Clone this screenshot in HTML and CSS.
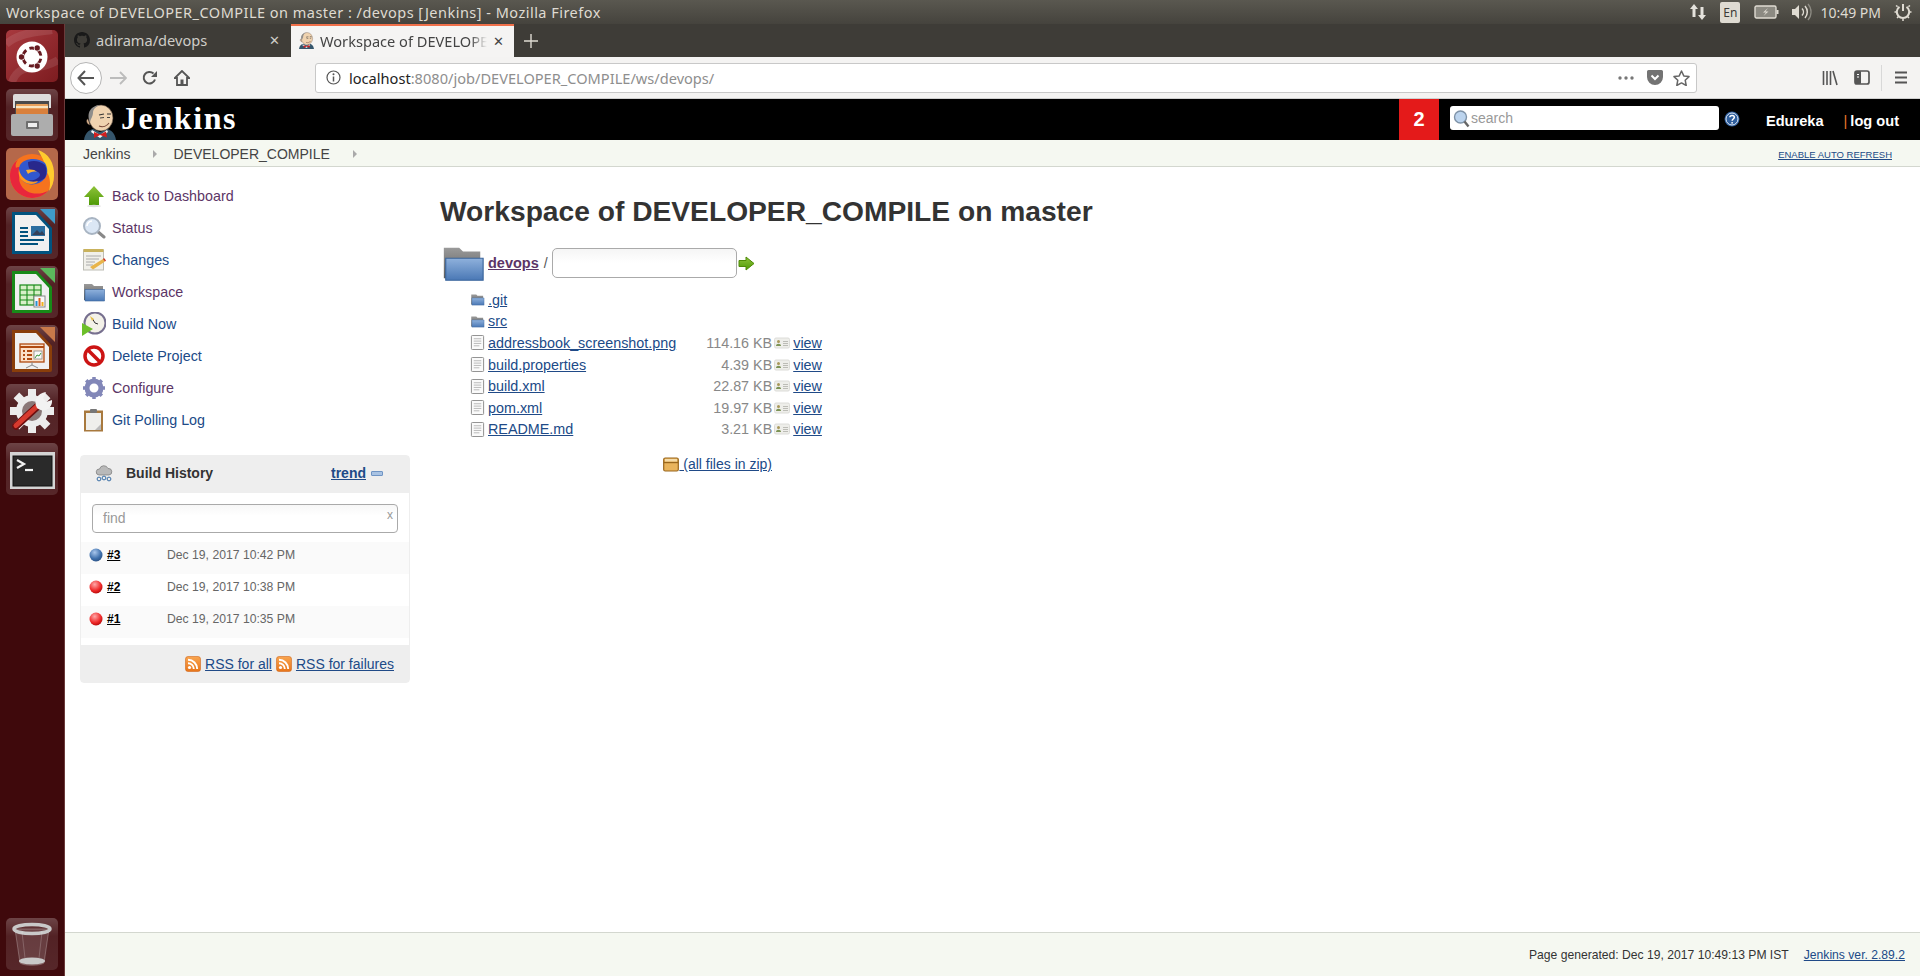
FILE: index.html
```html
<!DOCTYPE html>
<html lang="en">
<head>
    <meta charset="UTF-8">
    <title>Workspace of DEVELOPER_COMPILE on master : /devops [Jenkins]</title>
    <link rel="stylesheet" href="styles.css">
</head>
<body>
    <svg class="sprite" xmlns="http://www.w3.org/2000/svg">
        <defs>
            <linearGradient id="blueFolder" x1="0" y1="0" x2="0" y2="1"><stop offset="0" stop-color="#8fb1dc"/><stop offset="1" stop-color="#4a78b5"/></linearGradient>
            <linearGradient id="grayFolder" x1="0" y1="0" x2="0" y2="1"><stop offset="0" stop-color="#9a9a9a"/><stop offset="1" stop-color="#5c5c5c"/></linearGradient>
            <linearGradient id="greenArrow" x1="0" y1="0" x2="0" y2="1"><stop offset="0" stop-color="#8fc33a"/><stop offset="1" stop-color="#4e9a06"/></linearGradient>
            <radialGradient id="blueBall" cx=".4" cy=".3" r=".8"><stop offset="0" stop-color="#a8c6ec"/><stop offset=".6" stop-color="#3f70ac"/><stop offset="1" stop-color="#26497a"/></radialGradient>
            <radialGradient id="redBall" cx=".4" cy=".3" r=".8"><stop offset="0" stop-color="#ffa8a8"/><stop offset=".6" stop-color="#ef2929"/><stop offset="1" stop-color="#a40000"/></radialGradient>
            <linearGradient id="rssFill" x1="0" y1="0" x2="0" y2="1"><stop offset="0" stop-color="#f9a550"/><stop offset="1" stop-color="#e8751a"/></linearGradient>
        </defs>
        <symbol id="i-folder" viewBox="0 0 24 24">
            <path d="M2 4h8l2 2h9v14H2z" fill="url(#grayFolder)"/>
            <path d="M3 9.500h19.500v11.500H3z" fill="url(#blueFolder)" stroke="#3b659c" stroke-width=".6"/>
        </symbol>
        <symbol id="i-file" viewBox="0 0 16 16">
            <rect x="1.500" y=".5" width="13" height="15" rx="1" fill="#fafafa" stroke="#8a8a8a"/>
            <path d="M4 4h8M4 6.500h8M4 9h8M4 11.500h6" stroke="#b5b5b5" stroke-width="1"/>
        </symbol>
        <symbol id="i-view" viewBox="0 0 16 12">
            <rect x=".5" y="1" width="15" height="10" rx="1.500" fill="#eeeeea" stroke="#dcdcd8"/>
            <circle cx="4.500" cy="4.500" r="1.500" fill="#a8985a"/>
            <path d="M2 9c0-3 5-3 5 0z" fill="#7c9354"/>
            <path d="M9 4.500h5M9 6.500h5M9 8.500h5" stroke="#b5b5b0" stroke-width=".9"/>
        </symbol>
        <symbol id="i-rss" viewBox="0 0 16 16">
            <rect x=".5" y=".5" width="15" height="15" rx="2.500" fill="url(#rssFill)" stroke="#d2691e" stroke-width=".6"/>
            <circle cx="4.500" cy="11.500" r="1.600" fill="#fff"/>
            <path d="M3 7.200a5.800 5.800 0 0 1 5.800 5.800M3 3.800a9.200 9.200 0 0 1 9.200 9.200" fill="none" stroke="#fff" stroke-width="1.900"/>
        </symbol>
        <symbol id="i-butler" viewBox="0 0 32 36">
            <path d="M0 36c1-7 5-10 9-11l7 3 7-3c4 1 8 4 9 11z" fill="#35556b"/>
            <path d="M4 15c-2 0-2 5 2 6z" fill="#e6bd95" stroke="#4a3a30" stroke-width=".5"/>
            <ellipse cx="17" cy="14" rx="12" ry="13" fill="#f0d3b0" stroke="#4a3a30" stroke-width=".6"/>
            <path d="M6 18C2 9 7 1 17 1c-5 1-8 4-8 8 0 3-2 5-3 9z" fill="#8f8d8b"/>
            <path d="M15 11l5-1M23 10l4 0" stroke="#333" stroke-width="1.200"/>
            <path d="M16 14l4-.5M23 13.500h3" stroke="#333" stroke-width=".9"/>
            <path d="M15 22c4 1.500 8 0 10-3" fill="none" stroke="#7a4a3a" stroke-width="1.100"/>
            <path d="M8 26l8 5 7-5 1 2-8 6-9-6z" fill="#f5f5f5"/>
            <path d="M10 28l6 2.500 6-3 1 6-7-2.500-6 3z" fill="#d01f1f"/>
        </symbol>
    </svg>

    <div class="title-bar">
        <div class="title-text">Workspace of DEVELOPER_COMPILE on master : /devops [Jenkins] - Mozilla Firefox</div>
        <div class="indicators">
            <svg class="ind-net" width="18" height="20" viewBox="0 0 18 20"><path d="M5 2l4 5H6.500v8h-3V7H1zM13 18l-4-5h2.500V5h3v8H17z" fill="#e4e2dc"/></svg>
            <span class="ind-lang">En</span>
            <svg class="ind-batt" width="25" height="14" viewBox="0 0 25 14"><rect x="1" y="1" width="21" height="12" rx="1.500" fill="#8c8a82" stroke="#dfdbd2" stroke-width="1.400"/><rect x="22.500" y="5" width="2" height="4" fill="#dfdbd2"/><path d="M14 3l-5 4.500h3L9.500 11l5-4.500h-3z" fill="#dfdbd2"/></svg>
            <svg class="ind-sound" width="22" height="20" viewBox="0 0 22 20"><path d="M1 7h3l4-4v14l-4-4H1z" fill="#dfdbd2"/><path d="M11 6.500a5 5 0 0 1 0 7M14 4a9 9 0 0 1 0 12" fill="none" stroke="#dfdbd2" stroke-width="1.500"/><path d="M17 2a12 12 0 0 1 0 16" fill="none" stroke="#8c8a82" stroke-width="1.300"/></svg>
            <span class="ind-time">10:49 PM</span>
            <svg class="ind-power" width="18" height="18" viewBox="0 0 18 18"><path d="M9 1v7" stroke="#dfdbd2" stroke-width="2"/><path d="M5.500 3.800a6.200 6.200 0 1 0 7 0" fill="none" stroke="#dfdbd2" stroke-width="2"/><path d="M2 2.500l1.600 1.200M16 2.500l-1.600 1.200M.5 9h1.600M15.900 9h1.600M3 15l1.300-1.300M15 15l-1.300-1.300M9 16v2" stroke="#dfdbd2" stroke-width="1.500"/></svg>
        </div>
    </div>

    <div class="desktop">
        <div class="launcher">
            <div class="tile tile-ubuntu">
                <svg width="52" height="52" viewBox="0 0 52 52">
                    <path d="M0 14C14 2 34 2 46 0M6 52C14 30 30 44 52 30" fill="none" stroke="#fff" stroke-opacity=".1" stroke-width="8"/>
                    <circle cx="26" cy="27" r="15.500" fill="#fff"/>
                    <circle cx="26" cy="27" r="9" fill="none" stroke="#661a20" stroke-width="2.800" stroke-dasharray="15.300 3.550" stroke-dashoffset="-1.800"/>
                    <circle cx="15.500" cy="27" r="3.400" fill="#fff"/><circle cx="15.500" cy="27" r="2.700" fill="#661a20"/>
                    <circle cx="31.200" cy="18" r="3.400" fill="#fff"/><circle cx="31.200" cy="18" r="2.700" fill="#661a20"/>
                    <circle cx="31.200" cy="36" r="3.400" fill="#fff"/><circle cx="31.200" cy="36" r="2.700" fill="#661a20"/>
                </svg>
            </div>
            <div class="tile">
                <svg width="52" height="52" viewBox="0 0 52 52">
                    <path d="M7 7a2 2 0 0 1 2-2h34a2 2 0 0 1 2 2v12H7z" fill="#dcdcdc"/>
                    <rect x="9" y="12" width="34" height="16" fill="#4a4a4a"/>
                    <rect x="10" y="15" width="32" height="8" rx="1" fill="#e8a15c"/>
                    <rect x="10" y="17" width="32" height="2" fill="#f7e3c0"/>
                    <rect x="10" y="20" width="32" height="8" fill="#d9803c"/>
                    <rect x="5" y="25" width="42" height="22" rx="2" fill="#adadad"/>
                    <rect x="20" y="32" width="13" height="8" rx="1" fill="#6e6e6e"/>
                    <rect x="22" y="34" width="9" height="4" fill="#efefef"/>
                </svg>
            </div>
            <div class="tile tile-firefox">
                <svg width="52" height="52" viewBox="0 0 52 52">
                    <circle cx="26" cy="28" r="22" fill="#f6731e"/>
                    <path d="M4 28a22 22 0 0 0 38 15c-10 5-24 3-28-8-3-8 2-12 6-14-3-2-8-3-10-1-1-3 0-6 2-8-5 3-8 9-8 16z" fill="#e8263c"/>
                    <path d="M32 2c10 3 17 13 16 26 0 6-2 11-5 15 2-8 1-15-3-20 0-8-4-13-8-21z" fill="#ffcb2e"/>
                    <path d="M14 17c5-7 17-8 25-2 3 5 3 11 0 15-6 8-17 8-22 3-4-5-5-11-3-16z" fill="#3158cf"/>
                    <path d="M22 14c6-2 12-1 17 3 2 4 2 9 0 13-4 4-12 5-17 2 5 1 11-1 12-5 0-3-5-5-9-4-2-2-3-5-3-9z" fill="#28288c"/>
                    <path d="M13 21c1 8 9 15 19 12-2 4-11 4-15 0-4-3-5-8-4-12z" fill="#ff9a1e"/>
                    <path d="M20 22c3-1 9-1 11 2-3-1-7 0-9 2z" fill="#ffb12e"/>
                </svg>
            </div>
            <div class="tile">
                <svg width="52" height="52" viewBox="0 0 52 52">
                    <path d="M6 5h25l15 16v24a2 2 0 0 1-2 2H6z" fill="#01537f"/>
                    <path d="M9 8h21l13 14v22H9z" fill="#f0f0f0"/>
                    <path d="M34 2h15v15z" fill="#3f9ac9"/>
                    <path d="M14 21h8M14 25h8M14 29h8M14 33h24M14 37h18" stroke="#01537f" stroke-width="2"/>
                    <rect x="25" y="19" width="14" height="10" fill="#2c6ea0"/>
                    <path d="M26 28l5-5 3 3 2-2 3 4z" fill="#35415a"/>
                </svg>
            </div>
            <div class="tile">
                <svg width="52" height="52" viewBox="0 0 52 52">
                    <path d="M6 5h25l15 16v24a2 2 0 0 1-2 2H6z" fill="#188a18"/>
                    <path d="M9 8h21l13 14v22H9z" fill="#f0f0f0"/>
                    <path d="M34 2h15v15z" fill="#5cb85c"/>
                    <rect x="14" y="19" width="21" height="20" fill="#d8f0c8" stroke="#188a18" stroke-width="1.200"/>
                    <path d="M14 24h21M14 29h21M14 34h21M21 19v20M28 19v20" stroke="#188a18" stroke-width="1.100"/>
                    <rect x="28" y="30" width="11" height="11" fill="#f8f8f8" stroke="#888" stroke-width="1"/>
                    <rect x="29.500" y="35" width="2" height="5" fill="#2a8fd0"/><rect x="32.500" y="32" width="2" height="8" fill="#e06020"/><rect x="35.500" y="36" width="2" height="4" fill="#f0b020"/>
                </svg>
            </div>
            <div class="tile">
                <svg width="52" height="52" viewBox="0 0 52 52">
                    <path d="M6 5h25l15 16v24a2 2 0 0 1-2 2H6z" fill="#8a3e0a"/>
                    <path d="M9 8h21l13 14v22H9z" fill="#f0f0f0"/>
                    <path d="M34 2h15v15z" fill="#c8794a"/>
                    <rect x="14" y="19" width="24" height="18" fill="#fce0c8" stroke="#b04a10" stroke-width="1.300"/>
                    <path d="M14 22h24" stroke="#b04a10" stroke-width="2"/>
                    <path d="M17 26h2M21 26h5M17 30h2M21 30h5M17 34h2M21 34h5" stroke="#b04a10" stroke-width="2"/>
                    <rect x="28" y="26" width="8" height="8" fill="#f8f8f8" stroke="#888" stroke-width=".8"/>
                    <path d="M29 33l2-3 2 1 2-3" fill="none" stroke="#3a9a3a" stroke-width="1"/>
                    <path d="M26 37v3M26 40l-6 3M26 40l6 3" stroke="#888" stroke-width="1"/>
                </svg>
            </div>
            <div class="tile">
                <svg width="52" height="52" viewBox="0 0 52 52">
                    <circle cx="26" cy="27" r="16" fill="#ececec"/>
                    <path d="M26 5v44M4 27h44M10.400 11.400l31.200 31.200M41.600 11.400L10.400 42.600" stroke="#ececec" stroke-width="8"/>
                    <circle cx="26" cy="27" r="10" fill="#8a7878"/>
                    <path d="M10 42L33 21" stroke="#6e0f0f" stroke-width="7.500" stroke-linecap="round"/>
                    <path d="M10 41.500L33 20.500" stroke="#d63a2e" stroke-width="5" stroke-linecap="round"/>
                    <path d="M31 24c-4-7 0-15 9-16l-3 6 3 4 6-2c1 8-8 14-15 8z" fill="#f2f2f2"/>
                </svg>
            </div>
            <div class="tile">
                <svg width="52" height="52" viewBox="0 0 52 52">
                    <rect x="4" y="9" width="45" height="37" fill="#d4d4d4"/>
                    <rect x="7" y="13" width="39" height="30" fill="#2a2a2a" stroke="#111" stroke-width="1"/>
                    <path d="M11 17l7 4-7 4" fill="none" stroke="#f2f2f2" stroke-width="2.200"/>
                    <path d="M19 27h8" stroke="#f2f2f2" stroke-width="2.200"/>
                </svg>
            </div>
            <div class="launcher-spacer"></div>
            <div class="tile">
                <svg width="52" height="52" viewBox="0 0 52 52">
                    <path d="M9 11l5 34c4 3 20 3 24 0l5-34z" fill="#fff" fill-opacity=".12" stroke="#fff" stroke-opacity=".25"/>
                    <ellipse cx="26" cy="43" rx="13" ry="3.500" fill="#c9c9c9"/>
                    <ellipse cx="26" cy="11" rx="18" ry="4.500" fill="none" stroke="#c9c9c9" stroke-width="3.500"/>
                    <path d="M16 14l3 26M36 14l-3 26" stroke="#fff" stroke-opacity=".2"/>
                </svg>
            </div>
        </div>

        <div class="browser">
            <div class="tab-bar">
                <div class="tab">
                    <svg class="tab-icon" width="16" height="16" viewBox="0 0 16 16"><path fill="#191919" d="M8 0C3.580 0 0 3.580 0 8c0 3.540 2.290 6.530 5.470 7.590.4.070.55-.17.55-.38 0-.19-.01-.82-.01-1.490-2.010.37-2.530-.49-2.690-.94-.09-.23-.48-.94-.82-1.130-.28-.15-.68-.52-.01-.53.63-.01 1.080.58 1.230.82.72 1.210 1.870.87 2.330.66.070-.52.28-.87.51-1.070-1.780-.2-3.640-.89-3.640-3.950 0-.87.31-1.590.82-2.150-.08-.2-.36-1.020.08-2.120 0 0 .67-.21 2.200.82.64-.18 1.320-.27 2-.27.68 0 1.360.09 2 .27 1.530-1.040 2.200-.82 2.200-.82.44 1.100.16 1.920.08 2.120.51.56.82 1.270.82 2.150 0 3.070-1.870 3.750-3.650 3.950.29.25.54.73.54 1.480 0 1.070-.01 1.930-.01 2.200 0 .21.15.46.55.38A8.013 8.013 0 0016 8c0-4.420-3.580-8-8-8z"/></svg>
                    <span class="tab-label">adirama/devops</span>
                    <span class="tab-close">&#x2715;</span>
                </div>
                <div class="tab tab-active">
                    <svg class="tab-icon" width="15" height="17"><use href="#i-butler"/></svg>
                    <span class="tab-label tab-fade">Workspace of DEVELOPE</span>
                    <span class="tab-close">&#x2715;</span>
                </div>
                <svg class="tab-new" width="14" height="14" viewBox="0 0 14 14"><path d="M7 0v14M0 7h14" stroke="#dfdbd2" stroke-width="1.400"/></svg>
            </div>

            <div class="toolbar">
                <div class="back-btn">
                    <svg width="18" height="16" viewBox="0 0 18 16"><path d="M8 1L1.500 8 8 15M2 8h15" fill="none" stroke="#555" stroke-width="2"/></svg>
                </div>
                <svg class="tool-fwd" width="17" height="14" viewBox="0 0 17 14"><path d="M10 1l6 6-6 6M15 7H0" fill="none" stroke="#bcbcbc" stroke-width="1.800"/></svg>
                <svg class="tool-reload" width="16" height="16" viewBox="0 0 16 16"><path d="M13 9.500A5.800 5.800 0 1 1 11.500 3.500" fill="none" stroke="#555" stroke-width="2"/><path d="M15 1v6H9z" fill="#555"/></svg>
                <svg class="tool-home" width="16" height="16" viewBox="0 0 16 16"><path d="M8 1L.8 8h2.200v7h10V8h2.200z" fill="none" stroke="#555" stroke-width="1.800"/><rect x="6.500" y="9.500" width="3" height="5.500" fill="#555"/></svg>
                <div class="url-bar">
                    <svg class="url-info" width="15" height="15" viewBox="0 0 15 15"><circle cx="7.500" cy="7.500" r="6.500" fill="none" stroke="#555" stroke-width="1.200"/><path d="M7.500 6.500v5" stroke="#555" stroke-width="1.500"/><circle cx="7.500" cy="4.200" r="1" fill="#555"/></svg>
                    <span class="url-text"><b>localhost</b>:8080/job/DEVELOPER_COMPILE/ws/devops/</span>
                    <svg class="url-dots" width="16" height="4" viewBox="0 0 16 4"><circle cx="2" cy="2" r="1.700" fill="#777"/><circle cx="8" cy="2" r="1.700" fill="#777"/><circle cx="14" cy="2" r="1.700" fill="#777"/></svg>
                    <svg class="url-pocket" width="16" height="15" viewBox="0 0 16 15"><path d="M1.500 0h13A1.500 1.500 0 0 1 16 1.500V7a8 8 0 0 1-16 0V1.500A1.500 1.500 0 0 1 1.500 0z" fill="#737373"/><path d="M4.500 5.500L8 9l3.500-3.500" fill="none" stroke="#fff" stroke-width="2"/></svg>
                    <svg class="url-star" width="17" height="16" viewBox="0 0 17 16"><path d="M8.500 1l2.300 4.900 5.200.7-3.800 3.600 1 5.300-4.700-2.600-4.700 2.600 1-5.300L1 6.600l5.200-.7z" fill="none" stroke="#666" stroke-width="1.500" stroke-linejoin="round"/></svg>
                </div>
                <svg class="tool-lib" width="16" height="16" viewBox="0 0 16 16"><path d="M1.500 1v14M5 1v14M8.500 1v14M11 1l4 14" stroke="#555" stroke-width="1.600"/></svg>
                <svg class="tool-side" width="16" height="15" viewBox="0 0 16 15"><rect x="1" y="1" width="14" height="13" rx="2" fill="none" stroke="#555" stroke-width="1.700"/><rect x="1" y="1" width="6" height="13" rx="1" fill="#555"/><path d="M3 4.500h2M3 7h2" stroke="#fff"/></svg>
                <span class="tool-sep"></span>
                <svg class="tool-menu" width="14" height="13" viewBox="0 0 14 13"><path d="M1 1.500h12M1 6.500h12M1 11.500h12" stroke="#555" stroke-width="1.800"/></svg>
            </div>

            <div class="page">
                <div class="jenkins-head">
                    <div class="logo">
                        <svg width="32" height="36"><use href="#i-butler"/></svg>
                        <span class="logo-text">Jenkins</span>
                    </div>
                    <div class="head-right">
                        <span class="notif">2</span>
                        <div class="search-box">
                            <svg width="17" height="19" viewBox="0 0 17 19"><circle cx="7.500" cy="8" r="6" fill="#bcd4ee" stroke="#7f93a8" stroke-width="1.400"/><path d="M11.500 12.500l4 5" stroke="#666" stroke-width="2.400"/></svg>
                            <span>search</span>
                        </div>
                        <svg class="help" width="16" height="16" viewBox="0 0 16 16"><circle cx="8" cy="8" r="7.500" fill="#2f5f9e"/><circle cx="8" cy="8" r="6" fill="none" stroke="#dfe8f3" stroke-width="1"/><path d="M5.800 6.300C6 3.700 10.500 3.800 10.300 6.400c-.1 1.600-2.200 1.600-2.200 3.400" fill="none" stroke="#fff" stroke-width="1.500"/><circle cx="8.100" cy="11.800" r=".9" fill="#fff"/></svg>
                        <span class="user">Edureka</span>
                        <span class="logout"><i>|</i>log out</span>
                    </div>
                </div>

                <div class="breadcrumbs">
                    <span class="crumb">Jenkins</span><span class="crumb-arrow"></span>
                    <span class="crumb">DEVELOPER_COMPILE</span><span class="crumb-arrow"></span>
                    <a class="auto-refresh" href="#">ENABLE AUTO REFRESH</a>
                </div>

                <div class="main">
                    <div class="side-panel">
                        <div class="tasks">
                            <a class="task visited" href="#">
                                <svg width="24" height="24" viewBox="0 0 24 24"><path d="M12 2l10 11h-5v8H7v-8H2z" fill="url(#greenArrow)"/><ellipse cx="12" cy="22" rx="7" ry="1.200" fill="#ddd"/></svg>
                                Back to Dashboard</a>
                            <a class="task visited" href="#">
                                <svg width="24" height="24" viewBox="0 0 24 24"><path d="M15 15l7 6" stroke="#888" stroke-width="3" stroke-linecap="round"/><circle cx="10" cy="10" r="8" fill="#dbe7f5" stroke="#a8b4c2" stroke-width="2"/><path d="M5 10a5 5 0 0 1 5-5" fill="none" stroke="#fff" stroke-width="1.500"/></svg>
                                Status</a>
                            <a class="task" href="#">
                                <svg width="24" height="24" viewBox="0 0 24 24"><rect x="1.500" y="2" width="20" height="20" fill="#f1f0ea" stroke="#bdbdb5"/><rect x="1.500" y="1" width="20" height="3" fill="#c9b25c"/><path d="M4 8h15M4 11h13M4 14h9M4 17h7" stroke="#aaa" stroke-width="1"/><path d="M8 19l13-8 2 2.500-12 8z" fill="#e8b44a"/><path d="M21 11l2 2.500 1-1-2-2.500z" fill="#cc2a1a"/></svg>
                                Changes</a>
                            <a class="task visited" href="#">
                                <svg width="24" height="24"><use href="#i-folder"/></svg>
                                Workspace</a>
                            <a class="task" href="#">
                                <svg width="24" height="24" viewBox="0 0 24 24"><circle cx="13" cy="11" r="10.500" fill="#f3f1e8" stroke="#77708f" stroke-width="2"/><path d="M13 11l-3-5M13 11l3 1" stroke="#333" stroke-width="1"/><path d="M8 4l4 3-2 2z" fill="#e8c04a"/><path d="M0 11l11 6-11 7z" fill="#6cbf2a"/></svg>
                                Build Now</a>
                            <a class="task" href="#">
                                <svg width="24" height="24" viewBox="0 0 24 24"><circle cx="12" cy="12" r="9" fill="#fff" stroke="#cc1414" stroke-width="3.500"/><path d="M5.500 5.500l13 13" stroke="#cc1414" stroke-width="3.500"/></svg>
                                Delete Project</a>
                            <a class="task visited" href="#">
                                <svg width="24" height="24" viewBox="0 0 24 24"><circle cx="12" cy="12" r="7" fill="none" stroke="#8287b8" stroke-width="5"/><path d="M12 1v4M12 19v4M1 12h4M19 12h4M4.200 4.200l3 3M16.800 16.800l3 3M19.800 4.200l-3 3M7.200 16.800l-3 3" stroke="#8287b8" stroke-width="3.500"/></svg>
                                Configure</a>
                            <a class="task" href="#">
                                <svg width="24" height="24" viewBox="0 0 24 24"><rect x="2" y="2.500" width="19" height="21" fill="#a8793e"/><rect x="4" y="5" width="15" height="17" fill="#efefec"/><rect x="8" y="1" width="7" height="4" rx="1" fill="#777"/><path d="M13 22l6-6v6z" fill="#bbb"/></svg>
                                Git Polling Log</a>
                        </div>

                        <div class="history">
                            <div class="history-head">
                                <svg width="18" height="18" viewBox="0 0 18 18"><path d="M4 11a3 3 0 0 1 .5-6 4.500 4.500 0 0 1 8.500-.5 3.200 3.200 0 0 1 1 6.500z" fill="#b9b9b9" stroke="#777" stroke-width=".7"/><circle cx="4" cy="15" r="1.900" fill="none" stroke="#3a6ea5" stroke-width="1"/><circle cx="9" cy="14" r="1.900" fill="none" stroke="#3a6ea5" stroke-width="1"/><circle cx="14" cy="15" r="1.900" fill="none" stroke="#3a6ea5" stroke-width="1"/></svg>
                                <span class="history-title">Build History</span>
                                <a class="trend" href="#">trend</a>
                                <span class="collapse"></span>
                            </div>
                            <div class="find-row">
                                <div class="find-box"><span>find</span><em>x</em></div>
                            </div>
                            <div class="build-row">
                                <svg width="14" height="14" viewBox="0 0 14 14"><circle cx="7" cy="7" r="6.500" fill="url(#blueBall)"/></svg>
                                <a class="build-no" href="#">#3</a>
                                <span class="build-date">Dec 19, 2017 10:42 PM</span>
                            </div>
                            <div class="build-row">
                                <svg width="14" height="14" viewBox="0 0 14 14"><circle cx="7" cy="7" r="6.500" fill="url(#redBall)"/></svg>
                                <a class="build-no" href="#">#2</a>
                                <span class="build-date">Dec 19, 2017 10:38 PM</span>
                            </div>
                            <div class="build-row">
                                <svg width="14" height="14" viewBox="0 0 14 14"><circle cx="7" cy="7" r="6.500" fill="url(#redBall)"/></svg>
                                <a class="build-no" href="#">#1</a>
                                <span class="build-date">Dec 19, 2017 10:35 PM</span>
                            </div>
                            <div class="history-foot">
                                <svg width="16" height="16"><use href="#i-rss"/></svg>
                                <a href="#">RSS for all</a>
                                <svg width="16" height="16"><use href="#i-rss"/></svg>
                                <a href="#">RSS for failures</a>
                            </div>
                        </div>
                    </div>

                    <div class="content">
                        <h1>Workspace of DEVELOPER_COMPILE on master</h1>
                        <div class="path-row">
                            <svg width="46" height="46"><use href="#i-folder"/></svg>
                            <a class="path-link" href="#">devops</a>
                            <span class="path-sep">/</span>
                            <div class="path-input"></div>
                            <svg class="path-go" width="17" height="15" viewBox="0 0 17 15"><path d="M1 4.500h7V1l8 6.500L8 14v-3.500H1z" fill="url(#greenArrow)" stroke="#4e8a06" stroke-width="1"/></svg>
                        </div>
                        <table class="files">
                            <tr><td class="f-icon"><svg width="15" height="15"><use href="#i-folder"/></svg></td><td colspan="4"><a href="#">.git</a></td></tr>
                            <tr><td class="f-icon"><svg width="15" height="15"><use href="#i-folder"/></svg></td><td colspan="4"><a href="#">src</a></td></tr>
                            <tr><td class="f-icon"><svg width="15" height="15"><use href="#i-file"/></svg></td><td><a href="#">addressbook_screenshot.png</a></td><td class="f-size">114.16 KB</td><td class="f-view"><svg width="16" height="12"><use href="#i-view"/></svg></td><td><a href="#">view</a></td></tr>
                            <tr><td class="f-icon"><svg width="15" height="15"><use href="#i-file"/></svg></td><td><a href="#">build.properties</a></td><td class="f-size">4.39 KB</td><td class="f-view"><svg width="16" height="12"><use href="#i-view"/></svg></td><td><a href="#">view</a></td></tr>
                            <tr><td class="f-icon"><svg width="15" height="15"><use href="#i-file"/></svg></td><td><a href="#">build.xml</a></td><td class="f-size">22.87 KB</td><td class="f-view"><svg width="16" height="12"><use href="#i-view"/></svg></td><td><a href="#">view</a></td></tr>
                            <tr><td class="f-icon"><svg width="15" height="15"><use href="#i-file"/></svg></td><td><a href="#">pom.xml</a></td><td class="f-size">19.97 KB</td><td class="f-view"><svg width="16" height="12"><use href="#i-view"/></svg></td><td><a href="#">view</a></td></tr>
                            <tr><td class="f-icon"><svg width="15" height="15"><use href="#i-file"/></svg></td><td><a href="#">README.md</a></td><td class="f-size">3.21 KB</td><td class="f-view"><svg width="16" height="12"><use href="#i-view"/></svg></td><td><a href="#">view</a></td></tr>
                        </table>
                        <div class="zip-row">
                            <a href="#"><svg width="16" height="15" viewBox="0 0 16 15"><rect x=".7" y="1" width="14.600" height="13" rx="1.500" fill="#e9b45c" stroke="#99661c" stroke-width="1.200"/><path d="M.7 5.500h14.600" stroke="#99661c" stroke-width="1.400"/><rect x="2" y="2" width="12" height="2.500" fill="#f5dba8"/></svg> (all files in zip)</a>
                        </div>
                    </div>
                </div>

                <div class="foot">
                    <span>Page generated: Dec 19, 2017 10:49:13 PM IST</span>
                    <a href="#">Jenkins ver. 2.89.2</a>
                </div>
            </div>
        </div>
    </div>
</body>
</html>
```

FILE: styles.css
```css
html, body { margin: 0; height: 100%; overflow: hidden; }
body { font-family: "Liberation Sans", Arial, sans-serif; font-size: 14px; color: #333; background: #fff; display: flex; flex-direction: column; }
a { color: #204a87; }
svg { display: block; flex: none; }

.sprite { position: absolute; width: 0; height: 0; overflow: hidden; }

/* ubuntu top panel */
.title-bar {
    height: 24px;
    flex: none;
    display: flex;
    align-items: center;
    justify-content: space-between;
    padding: 0 8px 0 6px;
    background: linear-gradient(#5a5850, #45433d);
    color: #dfdbd2;
    font-family: "Noto Sans", sans-serif;
    font-size: 14.5px;
    letter-spacing: .48px;
}
.indicators { display: flex; align-items: center; letter-spacing: 0; }
.ind-lang { width: 20px; height: 21px; margin-left: 13px; background: #dfdbd2; color: #3c3b37; border-radius: 2px; font-size: 12px; text-align: center; line-height: 21px; }
.ind-batt { margin-left: 14px; }
.ind-sound { margin-left: 12px; }
.ind-time { margin-left: 7px; font-size: 14px; }
.ind-power { margin-left: 13px; }

.desktop { flex: 1; display: flex; min-height: 0; }

/* launcher */
.launcher {
    width: 64px;
    flex: none;
    border-right: 1px solid #6b3a3a;
    background: #3f090c;
    padding: 6px 0;
    display: flex;
    flex-direction: column;
    align-items: center;
    gap: 7px;
}
.launcher-spacer { flex: 1; }
.tile { width: 52px; height: 52px; border-radius: 5px; background: linear-gradient(rgba(255,255,255,.24), rgba(255,255,255,.1) 35%, rgba(255,255,255,.12)); }
.tile-ubuntu { background: linear-gradient(135deg, #a8393e, #7d1c20); }
.tile-firefox { background: #b5684a; }

.browser { flex: 1; min-width: 0; display: flex; flex-direction: column; }

/* firefox tabs */
.tab-bar { height: 33px; flex: none; display: flex; align-items: center; background: #3e3c37; font-family: "Noto Sans", sans-serif; font-size: 14.6px; color: #cfcdc8; }
.tab { width: 226px; height: 33px; box-sizing: border-box; display: flex; align-items: center; padding: 0 9px 2px; flex: none; }
.tab-icon { margin-right: 6px; }
.tab-label { flex: 1; white-space: nowrap; }
.tab-close { font-size: 13px; margin-left: 6px; margin-right: 2px; }
.tab-active { width: 223px; background: #f5f4f3; color: #444; border-top: 2px solid #f0704a; padding: 0 9px 2px 8px; }
.tab-fade { -webkit-mask-image: linear-gradient(to right, #000 90%, transparent); mask-image: linear-gradient(to right, #000 90%, transparent); flex: none; width: 167px; margin-right: auto; }
.tab-new { margin-left: 10px; }

/* firefox toolbar */
.toolbar { height: 42px; flex: none; box-sizing: border-box; display: flex; align-items: center; background: #f4f3f2; border-bottom: 1px solid #cfcfcf; padding-left: 5px; }
.back-btn { width: 32px; height: 32px; box-sizing: border-box; border: 1px solid #b5b5b5; border-radius: 50%; background: #fff; display: flex; align-items: center; justify-content: center; flex: none; }
.tool-fwd { margin-left: 8px; }
.tool-reload { margin-left: 15px; }
.tool-home { margin-left: 16px; }
.url-bar { width: 1382px; height: 30px; flex: none; box-sizing: border-box; margin-left: 125px; display: flex; align-items: center; background: #fff; border: 1px solid #c8c8c8; border-radius: 3px; padding: 0 6px 0 10px; }
.url-text { flex: 1; margin-left: 8px; font-family: "Noto Sans", sans-serif; font-size: 14.6px; color: #8e8e8e; }
.url-text b { font-weight: 400; color: #222; }
.url-pocket { margin-left: 13px; }
.url-star { margin-left: 10px; }
.tool-lib { margin-left: 125px; }
.tool-side { margin-left: 16px; }
.tool-sep { width: 1px; height: 26px; background: #d8d8d8; margin-left: 11px; flex: none; }
.tool-menu { margin-left: 12px; }

.page { flex: 1; min-height: 0; display: flex; flex-direction: column; }

/* jenkins header */
.jenkins-head { height: 41px; flex: none; background: #000; display: flex; justify-content: space-between; color: #fff; }
.logo { display: flex; align-items: flex-end; padding-left: 19px; overflow: hidden; }
.logo-text { font-family: "Liberation Serif", serif; font-weight: 700; font-size: 32px; letter-spacing: 1.6px; margin-left: 5px; align-self: flex-start; line-height: 39px; }
.head-right { display: flex; align-items: center; }
.notif { width: 40px; height: 41px; background: #e41a1a; text-align: center; line-height: 41px; font-size: 20px; font-weight: 700; }
.search-box { width: 269px; height: 24px; box-sizing: border-box; margin-left: 11px; margin-top: -3px; display: flex; align-items: center; background: #fff; border-radius: 3px; padding-left: 3px; color: #999; }
.search-box span { margin-left: 1px; }
.help { margin-left: 5px; margin-top: -2px; }
.user { margin-left: 26px; font-weight: 700; font-size: 14.6px; margin-top: 3px; }
.logout { margin-left: 20px; margin-right: 21px; font-weight: 700; font-size: 14.6px; margin-top: 3px; }
.logout i { font-style: normal; font-weight: 400; color: #e9762a; margin-right: 3px; }

/* breadcrumbs */
.breadcrumbs { height: 27px; flex: none; box-sizing: border-box; display: flex; align-items: center; padding: 2px 28px 0 18px; background: #f5f8f1; border-bottom: 1px solid #d3d7cf; color: #444; }
.crumb-arrow { width: 0; height: 0; border-left: 4px solid #aaa; border-top: 4px solid transparent; border-bottom: 4px solid transparent; margin: 0 16px 0 23px; }
.auto-refresh { margin-left: auto; font-size: 9.5px; }

.main { flex: 1; min-height: 0; display: flex; }

/* left side */
.side-panel { width: 330px; flex: none; padding: 0 30px 0 15px; }
.tasks { padding-top: 13px; }
.task { height: 32px; display: flex; align-items: center; gap: 6px; padding-left: 2px; text-decoration: none; color: #204a87; font-size: 14.3px; }
.task.visited { color: #5c3566; }

.history { margin-top: 19px; border: 1px solid #eee; border-radius: 4px; box-sizing: border-box; height: 228px; display: flex; flex-direction: column; }
.history-head { height: 37px; flex: none; box-sizing: border-box; display: flex; align-items: center; background: #eee; padding: 0 26px 3px 14px; }
.history-title { margin-left: 13px; font-weight: 700; flex: 1; }
.trend { font-weight: 700; }
.collapse { width: 12px; height: 5px; background: #a9c3e3; border: 1px solid #6f94c4; box-sizing: border-box; margin-left: 5px; border-radius: 1px; }
.find-row { padding: 11px 11px 9px 11px; flex: none; }
.find-box { height: 29px; box-sizing: border-box; border: 1px solid #aaa; border-radius: 4px; display: flex; justify-content: space-between; padding: 0 4px 0 10px; line-height: 27px; color: #999; background: linear-gradient(#f7f7f7, #fff 40%); }
.find-box em { font-style: normal; font-size: 12px; line-height: 20px; }
.build-row { height: 32px; flex: none; box-sizing: border-box; display: flex; align-items: center; padding: 0 0 6px 8px; font-size: 12px; }
.build-row:nth-child(odd) { background: #fafafa; }
.build-no { width: 60px; margin-left: 4px; color: #000; font-weight: 700; }
.build-date { color: #666; font-size: 12.2px; }
.history-foot { margin-top: auto; height: 37px; flex: none; box-sizing: border-box; display: flex; align-items: center; justify-content: flex-end; gap: 4px; background: #eee; padding: 1px 15px 0 0; }

/* main panel */
.content { flex: 1; min-width: 0; }
h1 { margin: 0; font-size: 28.2px; line-height: 34px; padding-top: 27px; color: #333; }
.path-row { display: flex; align-items: center; margin-top: 14px; height: 42px; }
.path-link { margin-left: 2px; font-weight: 700; font-size: 14.5px; color: #5c3566; }
.path-sep { margin: 0 4px 0 5px; color: #555; }
.path-input { width: 185px; height: 30px; box-sizing: border-box; border: 1px solid #aaa; border-radius: 5px; background: linear-gradient(#f5f5f5, #fff 50%); }
.path-go { margin-left: 1px; }
.files { border-collapse: collapse; margin: 5px 0 0 30px; font-size: 14.35px; }
.files td { padding: 0; height: 21.6px; vertical-align: middle; white-space: nowrap; }
.f-icon { width: 18px; }
.f-size { width: 96px; text-align: right; color: #888; }
.files td.f-view { width: 21px; padding-left: 2px; box-sizing: border-box; }
.zip-row { width: 302px; margin: 16px 0 0 30px; text-align: right; }
.zip-row svg { display: inline-block; vertical-align: -3px; }

/* footer */
.foot { height: 44px; flex: none; box-sizing: border-box; display: flex; align-items: center; justify-content: flex-end; gap: 15px; padding-right: 15px; border-top: 1px solid #d3d7cf; background: #f5f8f1; font-size: 12.15px; }
```
